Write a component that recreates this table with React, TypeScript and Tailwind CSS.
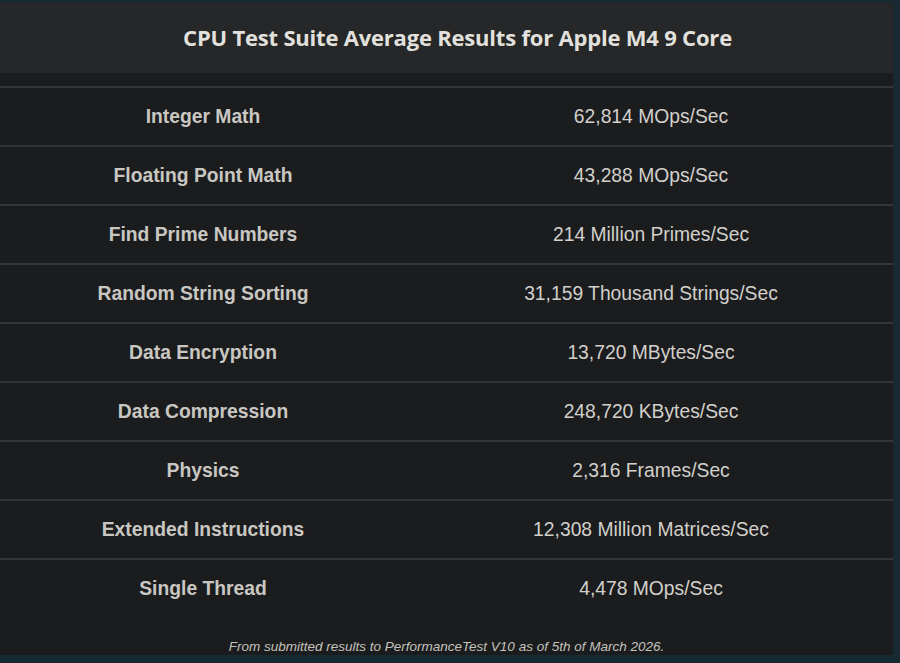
import React from "react";

const rows: [string, string][] = [
  ["Integer Math", "62,814 MOps/Sec"],
  ["Floating Point Math", "43,288 MOps/Sec"],
  ["Find Prime Numbers", "214 Million Primes/Sec"],
  ["Random String Sorting", "31,159 Thousand Strings/Sec"],
  ["Data Encryption", "13,720 MBytes/Sec"],
  ["Data Compression", "248,720 KBytes/Sec"],
  ["Physics", "2,316 Frames/Sec"],
  ["Extended Instructions", "12,308 Million Matrices/Sec"],
  ["Single Thread", "4,478 MOps/Sec"],
];

export default function App() {
  return (
    <div className="w-[900px] h-[663px] bg-[#172a31] pt-[3px] overflow-hidden">
      <div className="w-[893px] h-[652px] bg-[#1b1c1e] flex flex-col">
        <div className="h-[70px] bg-[#262728] flex items-center justify-center pl-[22px] pb-[2px]">
          <h1 className="text-[22px] font-bold text-[#e2e1dd] tracking-[-0.2px]" style={{ fontFamily: '"Open Sans", sans-serif' }}>
            CPU Test Suite Average Results for Apple M4 9 Core
          </h1>
        </div>
        <div className="h-[13px]" />
        <div className="flex flex-col" style={{ fontFamily: '"Liberation Sans", Arial, sans-serif' }}>
          {rows.map(([k, v]) => (
            <div key={k} className="flex h-[59px] items-center border-t-2 border-[#333537]">
              <div className="w-[406px] text-center text-[19.3px] font-bold text-[#c9c7c2] pt-[1px]">{k}</div>
              <div className="flex-1 text-center text-[19.3px] text-[#d2d0cb] pt-[1px] pl-[3px]">{v}</div>
            </div>
          ))}
        </div>
        <div className="flex-1 flex items-end justify-center pb-0">
          <p className="text-[13.5px] leading-[16px] italic text-[#c4c2bd]" style={{ fontFamily: '"Liberation Sans", Arial, sans-serif' }}>
            From submitted results to PerformanceTest V10 as of 5th of March 2026.
          </p>
        </div>
      </div>
    </div>
  );
}
